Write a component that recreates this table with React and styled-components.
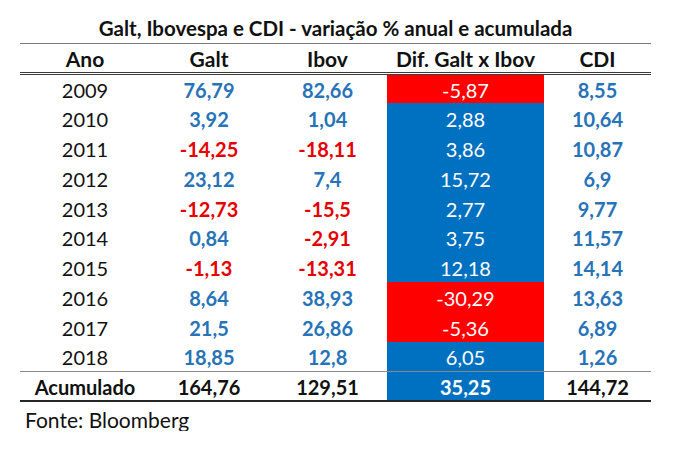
import React from "react";
import styled, { createGlobalStyle } from "styled-components";

const GlobalStyle = createGlobalStyle`
  html, body {
    margin: 0;
    padding: 0;
    background: #ffffff;
  }
  body {
    font-family: Lato, "Open Sans", "Liberation Sans", sans-serif;
    color: #111111;
  }
`;

const rows = [
  { ano: "2009", galt: "76,79", ibov: "82,66", dif: "-5,87", cdi: "8,55" },
  { ano: "2010", galt: "3,92", ibov: "1,04", dif: "2,88", cdi: "10,64" },
  { ano: "2011", galt: "-14,25", ibov: "-18,11", dif: "3,86", cdi: "10,87" },
  { ano: "2012", galt: "23,12", ibov: "7,4", dif: "15,72", cdi: "6,9" },
  { ano: "2013", galt: "-12,73", ibov: "-15,5", dif: "2,77", cdi: "9,77" },
  { ano: "2014", galt: "0,84", ibov: "-2,91", dif: "3,75", cdi: "11,57" },
  { ano: "2015", galt: "-1,13", ibov: "-13,31", dif: "12,18", cdi: "14,14" },
  { ano: "2016", galt: "8,64", ibov: "38,93", dif: "-30,29", cdi: "13,63" },
  { ano: "2017", galt: "21,5", ibov: "26,86", dif: "-5,36", cdi: "6,89" },
  { ano: "2018", galt: "18,85", ibov: "12,8", dif: "6,05", cdi: "1,26" },
];

const tone = (v) => (v.startsWith("-") ? "red" : "blue");

const Page = styled.div`
  padding-left: 20px;
  width: 631px;
`;

const Title = styled.div`
  box-sizing: border-box;
  height: 43px;
  padding-top: 15px;
  line-height: 26px;
  font-size: 20.5px;
  font-weight: 700;
  text-align: center;
  color: #111;
  white-space: nowrap;
`;

const Table = styled.table`
  width: 631px;
  table-layout: fixed;
  border-collapse: collapse;
  font-size: 20px;
`;

const HeadCell = styled.th`
  height: 28px;
  padding: 0;
  font-size: 21px;
  font-weight: 700;
  text-align: center;
  color: #111;
  border-top: 1px solid #7a7a7a;
  border-bottom: 3px double #3c3c3c;
  white-space: nowrap;
`;

const colors = {
  black: "#111111",
  blue: "#2773b8",
  red: "#e60000",
  white: "#ffffff",
};

const fills = {
  red: "#ff0000",
  blue: "#0070c0",
};

const Cell = styled.td`
  height: 29.8px;
  padding: 2px 0 0;
  box-sizing: border-box;
  text-align: center;
  white-space: nowrap;
  font-weight: ${(p) => (p.$bold ? 700 : 400)};
  color: ${(p) => colors[p.$tone || "black"]};
  background: ${(p) => (p.$fill ? fills[p.$fill] : "transparent")};
`;

const LastRow = styled.tr`
  td {
    border-bottom: 1px solid #8a8a8a;
  }
`;

const TotalRow = styled.tr`
  td {
    height: 30px;
    border-bottom: 2px solid #262626;
  }
`;

const Source = styled.div`
  padding-left: 5px;
  margin-top: 7px;
  font-size: 21px;
  line-height: 22px;
  color: #111;
`;

function DataRow({ r, last }) {
  const Row = last ? LastRow : "tr";
  const difFill = r.dif.startsWith("-") ? "red" : "blue";
  return (
    <Row>
      <Cell>{r.ano}</Cell>
      <Cell $bold $tone={tone(r.galt)}>{r.galt}</Cell>
      <Cell $bold $tone={tone(r.ibov)}>{r.ibov}</Cell>
      <Cell $fill={difFill} $tone="white">{r.dif}</Cell>
      <Cell $bold $tone="blue">{r.cdi}</Cell>
    </Row>
  );
}

export default function App() {
  return (
    <Page>
      <GlobalStyle />
      <Title>Galt, Ibovespa e CDI - variação % anual e acumulada</Title>
      <Table>
        <colgroup>
          <col style={{ width: 130 }} />
          <col style={{ width: 118 }} />
          <col style={{ width: 119 }} />
          <col style={{ width: 157 }} />
          <col style={{ width: 107 }} />
        </colgroup>
        <thead>
          <tr>
            <HeadCell>Ano</HeadCell>
            <HeadCell>Galt</HeadCell>
            <HeadCell>Ibov</HeadCell>
            <HeadCell>Dif. Galt x Ibov</HeadCell>
            <HeadCell>CDI</HeadCell>
          </tr>
        </thead>
        <tbody>
          {rows.map((r, i) => (
            <DataRow key={r.ano} r={r} last={i === rows.length - 1} />
          ))}
          <TotalRow>
            <Cell $bold>Acumulado</Cell>
            <Cell $bold>164,76</Cell>
            <Cell $bold>129,51</Cell>
            <Cell $bold $fill="blue" $tone="white">35,25</Cell>
            <Cell $bold>144,72</Cell>
          </TotalRow>
        </tbody>
      </Table>
      <Source>Fonte: Bloomberg</Source>
    </Page>
  );
}
